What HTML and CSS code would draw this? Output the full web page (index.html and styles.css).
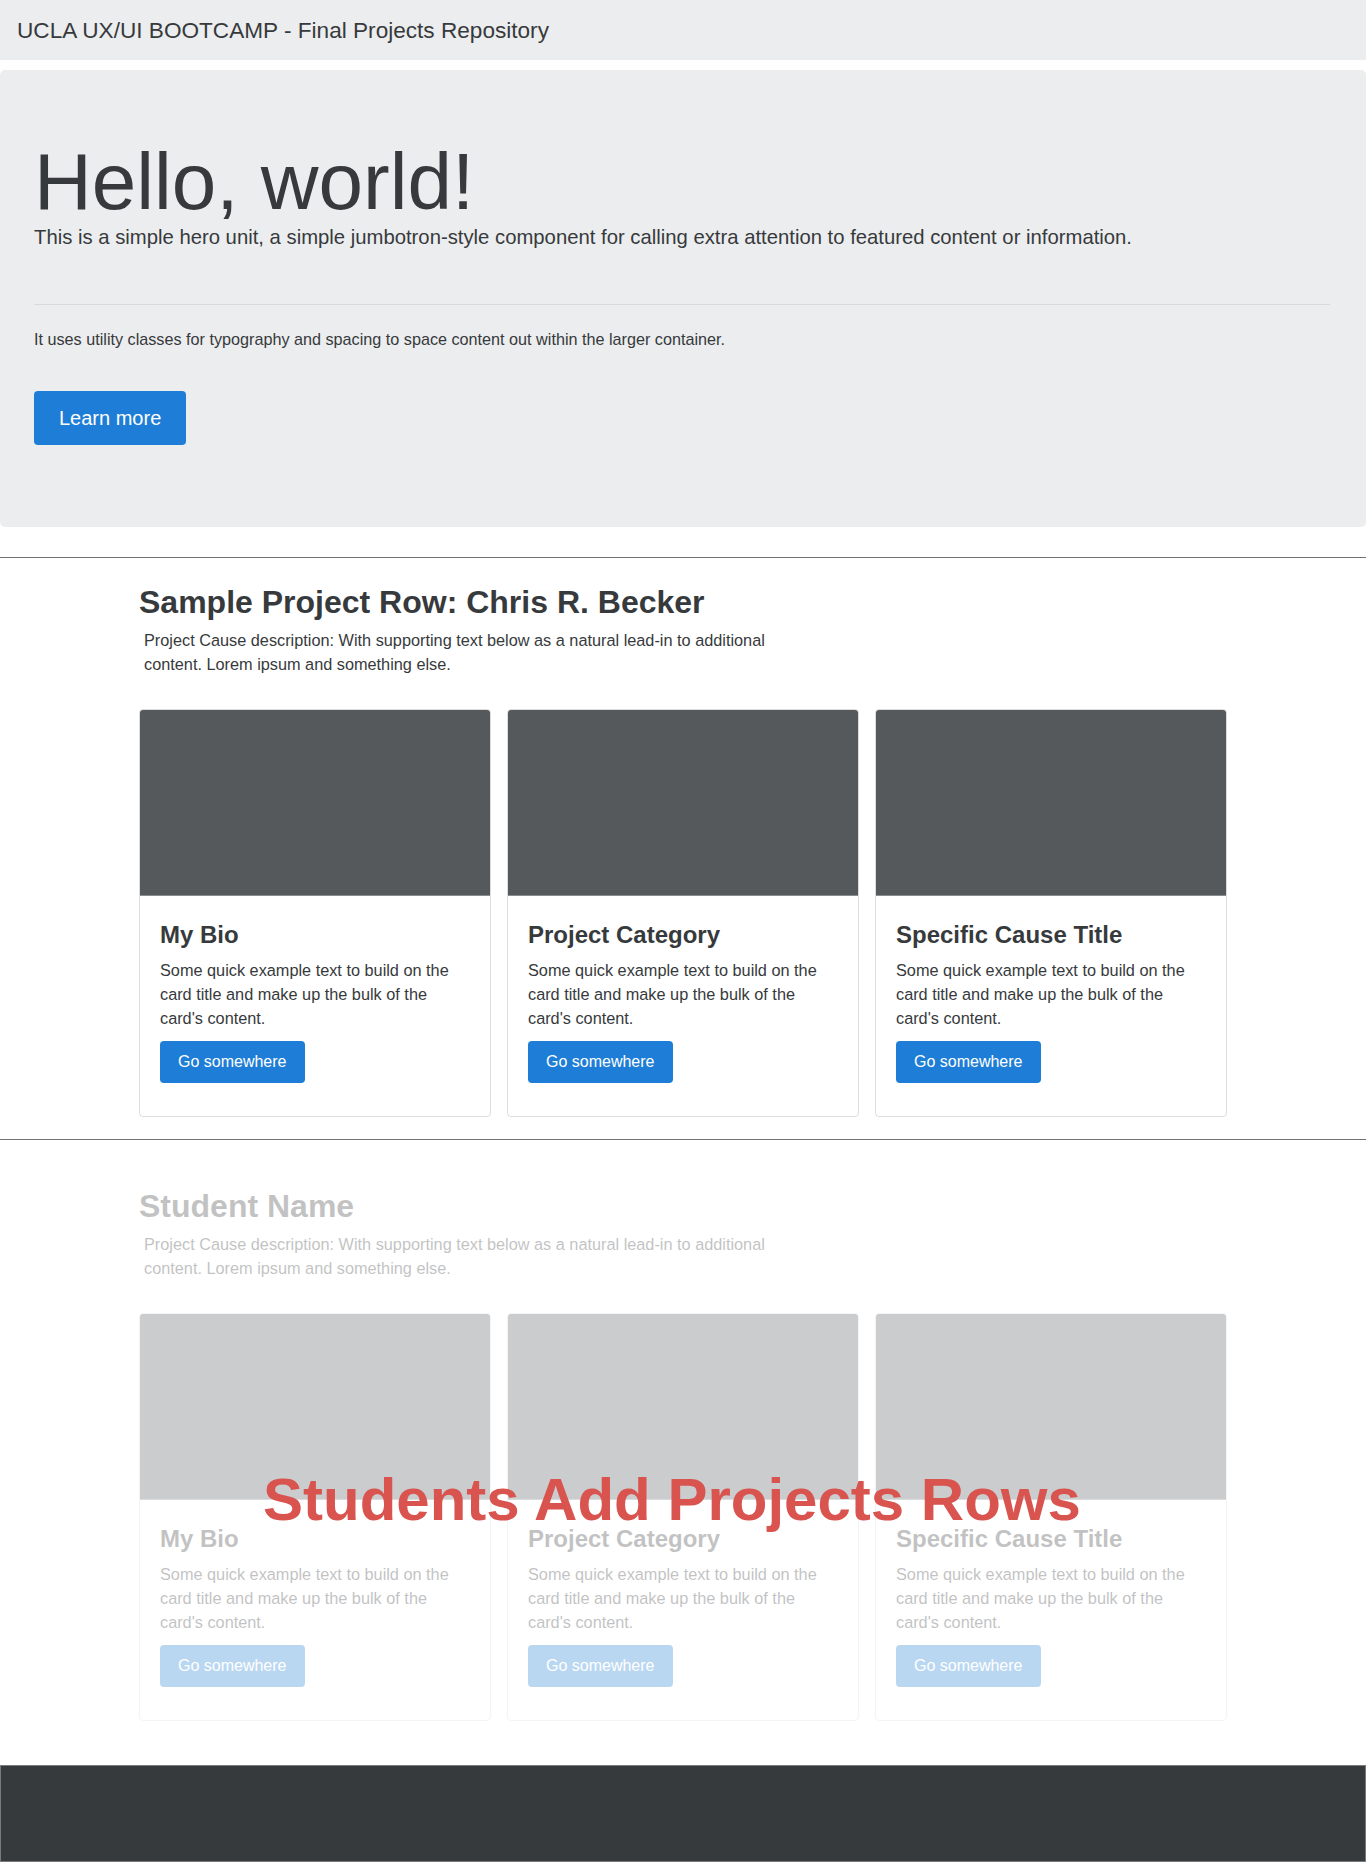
FILE: index.html
```html
<!DOCTYPE html>
<html lang="en">
<head>
<meta charset="utf-8">
<title>UCLA UX/UI BOOTCAMP - Final Projects Repository</title>
<link rel="stylesheet" href="styles.css">
</head>
<body>
<nav class="navbar">
  <span class="brand">UCLA UX/UI BOOTCAMP - Final Projects Repository</span>
</nav>

<header class="jumbotron">
  <h1 class="display">Hello, world!</h1>
  <p class="lead">This is a simple hero unit, a simple jumbotron-style component for calling extra attention to featured content or information.</p>
  <hr class="jumbo-rule">
  <p class="jumbo-text">It uses utility classes for typography and spacing to space content out within the larger container.</p>
  <a class="btn btn-lg" href="#">Learn more</a>
</header>

<section class="project-row first">
  <div class="container">
    <h2 class="row-title">Sample Project Row: Chris R. Becker</h2>
    <p class="row-desc">Project Cause description: With supporting text below as a natural lead-in to additional content. Lorem ipsum and something else.</p>
    <div class="cards">
      <div class="card">
        <div class="card-img"></div>
        <div class="card-body">
          <h5 class="card-title">My Bio</h5>
          <p class="card-text">Some quick example text to build on the card title and make up the bulk of the card's content.</p>
          <a class="btn" href="#">Go somewhere</a>
        </div>
      </div>
      <div class="card">
        <div class="card-img"></div>
        <div class="card-body">
          <h5 class="card-title">Project Category</h5>
          <p class="card-text">Some quick example text to build on the card title and make up the bulk of the card's content.</p>
          <a class="btn" href="#">Go somewhere</a>
        </div>
      </div>
      <div class="card">
        <div class="card-img"></div>
        <div class="card-body">
          <h5 class="card-title">Specific Cause Title</h5>
          <p class="card-text">Some quick example text to build on the card title and make up the bulk of the card's content.</p>
          <a class="btn" href="#">Go somewhere</a>
        </div>
      </div>
    </div>
  </div>
</section>

<section class="project-row second">
  <div class="container overlay-host">
    <div class="faded">
      <h2 class="row-title">Student Name</h2>
      <p class="row-desc">Project Cause description: With supporting text below as a natural lead-in to additional content. Lorem ipsum and something else.</p>
      <div class="cards">
        <div class="card">
          <div class="card-img"></div>
          <div class="card-body">
            <h5 class="card-title">My Bio</h5>
            <p class="card-text">Some quick example text to build on the card title and make up the bulk of the card's content.</p>
            <a class="btn" href="#">Go somewhere</a>
          </div>
        </div>
        <div class="card">
          <div class="card-img"></div>
          <div class="card-body">
            <h5 class="card-title">Project Category</h5>
            <p class="card-text">Some quick example text to build on the card title and make up the bulk of the card's content.</p>
            <a class="btn" href="#">Go somewhere</a>
          </div>
        </div>
        <div class="card">
          <div class="card-img"></div>
          <div class="card-body">
            <h5 class="card-title">Specific Cause Title</h5>
            <p class="card-text">Some quick example text to build on the card title and make up the bulk of the card's content.</p>
            <a class="btn" href="#">Go somewhere</a>
          </div>
        </div>
      </div>
    </div>
    <div class="overlay-text">Students Add Projects Rows</div>
  </div>
</section>

<footer class="footer"></footer>
</body>
</html>
```

FILE: styles.css
```css
* {
  box-sizing: border-box;
}

html, body {
  margin: 0;
  padding: 0;
}

body {
  font-family: "Liberation Sans", Arial, Helvetica, sans-serif;
  color: #373a3c;
  background: #ffffff;
  font-size: 16.3px;
  line-height: 24px;
}

.navbar {
  height: 60px;
  background: #ecedef;
  padding: 1px 0 0 17px;
  line-height: 60px;
}

.brand {
  font-size: 22.6px;
  color: #373a3c;
}

.jumbotron {
  margin-top: 10px;
  background: #ecedef;
  border-radius: 5px;
  padding: 72px 36px 82px 34px;
}

.display {
  margin: 0;
  font-size: 80px;
  line-height: 80px;
  font-weight: 300;
  color: #373a3c;
}

.lead {
  margin: 0;
  font-size: 20.3px;
  line-height: 30px;
}

.jumbo-rule {
  margin: 52px 0 22px 0;
  border: 0;
  border-top: 1px solid rgba(0, 0, 0, 0.08);
  height: 0;
}

.jumbo-text {
  margin: 0;
  font-size: 16.2px;
  line-height: 24px;
}

.btn {
  display: inline-block;
  background: #1e7dd6;
  color: #ffffff;
  text-decoration: none;
  border-radius: 4px;
  font-size: 16px;
  line-height: 24px;
  padding: 9px 18px;
}

.btn-lg {
  margin-top: 40px;
  font-size: 20px;
  line-height: 30px;
  padding: 12px 25px;
}

.project-row {
  border-top: 1px solid #707070;
}

.project-row.first {
  margin-top: 30px;
  padding: 25px 0 22px 0;
}

.project-row.second {
  padding: 47px 0 44px 0;
}

.container {
  width: 1088px;
  margin: 0 auto;
}

.overlay-host {
  position: relative;
}

.faded {
  opacity: 0.3;
}

.row-title {
  margin: 0;
  font-size: 32px;
  line-height: 38px;
  font-weight: 700;
  color: #373a3c;
}

.row-desc {
  margin: 7px 0 0 5px;
  max-width: 650px;
  font-size: 16.3px;
  line-height: 24px;
}

.cards {
  margin-top: 33px;
  display: grid;
  grid-template-columns: repeat(3, 352px);
  column-gap: 16px;
}

.card {
  border: 1px solid #dddddd;
  border-radius: 4px;
  background: #ffffff;
  overflow: hidden;
}

.card-img {
  height: 186px;
  background: #55595c;
  border-bottom: 1px solid #8a8d90;
}

.card-body {
  padding: 24px 28px 33px 20px;
}

.card-title {
  margin: 0;
  font-size: 24px;
  line-height: 29px;
  font-weight: 700;
  color: #373a3c;
}

.card-text {
  margin: 9px 0 11px 0;
  font-size: 16.3px;
  line-height: 24px;
}

.overlay-text {
  position: absolute;
  left: 124px;
  top: 277px;
  font-size: 60px;
  line-height: 72px;
  font-weight: 700;
  color: #d9534f;
  white-space: nowrap;
}

.footer {
  height: 97px;
  background: #373a3c;
  border: 1px solid #7a7a7a;
}
```
